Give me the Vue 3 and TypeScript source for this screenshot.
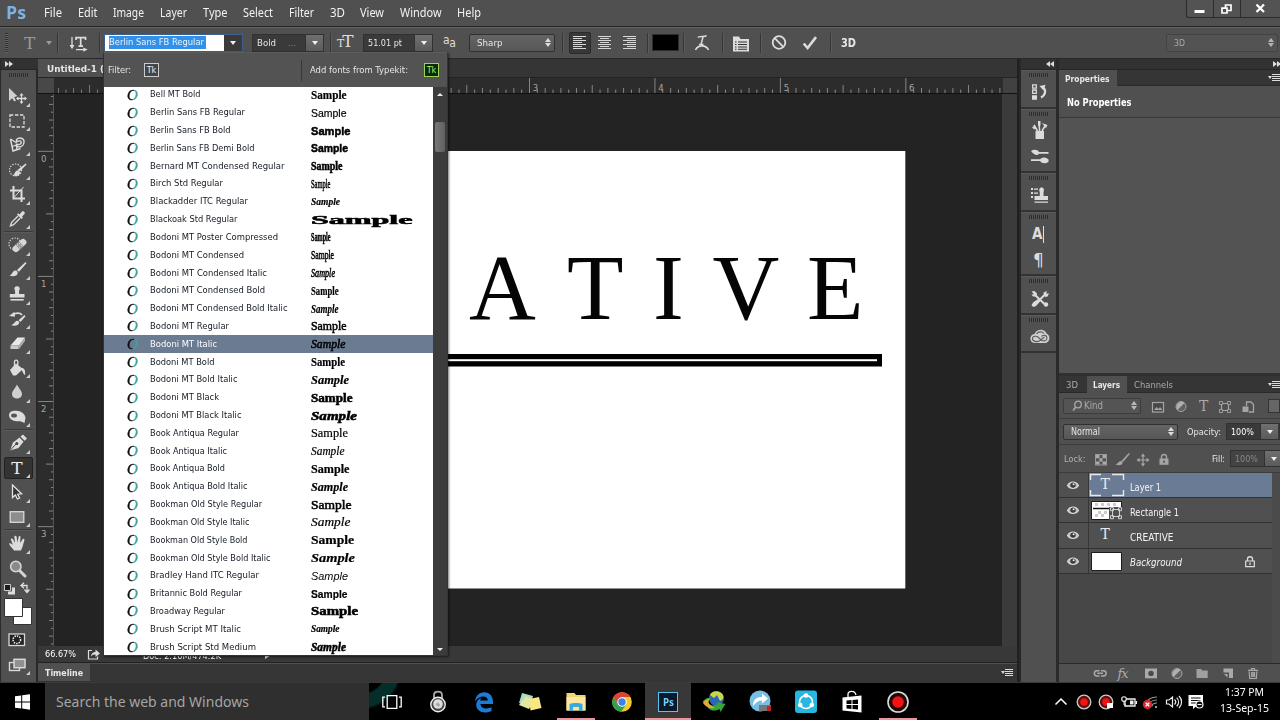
<script setup lang="ts">
import { h } from 'vue'

// Stretches a label horizontally to the given pixel width.
const vFit = {
  mounted(el: HTMLElement, b: { value: number }) {
    const natural = el.getBoundingClientRect().width
    el.style.transform = `scaleX(${b.value / natural})`
    el.style.marginRight = `${b.value - natural}px`
  },
}

const L = '#dcdcdc'
const S = (d: string, w = 1.4, c = L) => `<path d="${d}" fill="none" stroke="${c}" stroke-width="${w}"/>`
const F = (d: string, c = L) => `<path d="${d}" fill="${c}"/>`

const icons: Record<string, string> = {
  // toolbox, 24 x 24
  move: F('M4 4L4 17L7.2 14.2L9.2 17.5L11 16.4L9.2 13.2L12.3 12Z', '#d0d0d0') + S('M16.5 10V19M12 14.5H21', 1.3) + F('M16.5 9l2 2.4h-4zM16.5 20l2-2.4h-4zM11 14.5l2.4-2v4zM22 14.5l-2.4-2v4z'),
  marquee: `<rect x="5" y="6" width="14" height="12" fill="none" stroke="${L}" stroke-width="1.3" stroke-dasharray="3.4 1.6"/>`,
  lasso: S('M5.5 6L8 18L15.5 15.5', 1.5) + S('M5.5 6L11 9.5M7 13.5L12 12L11.5 17', 1.3) + S('M11.5 9V6.5C14 4.2 19.5 4.5 19 9.5C18.7 13.5 15 14.5 11.5 13.5V11.2C15 12 16.3 11 16.3 9.3C16.3 7.3 13.5 7.5 11.5 9Z', 1.4),
  quick: `<circle cx="10.5" cy="12" r="6" fill="none" stroke="${L}" stroke-width="1.2" stroke-dasharray="1.3 1.4"/>` + F('M20.6 5.4L21.6 6.6L14.6 13.6L12.5 12Z') + F('M8 17C10 16.5 9.5 13.5 12 12.5C15 12.5 16 15 14 17C12 18.5 10 18.5 8 17Z'),
  crop: S('M8.5 4V16.5H20M5 8.5H16.5V20', 2) + S('M18.5 5L9 15.5', 1),
  eyedrop: F('M14.5 7.5L17 4.5C19 3.5 20.5 5.5 19.5 7L17 9.5L18 10.8L16.5 12L12 7.5L13.3 6.3Z') + S('M13 9L6.5 15.5L5.5 18.8L8.6 17.7L15 11.2', 1.4),
  heal: `<circle cx="10" cy="11" r="6" fill="none" stroke="${L}" stroke-width="1.2" stroke-dasharray="1.3 1.4"/><g transform="rotate(-42 14.5 12.5)"><rect x="6.5" y="9.2" width="16" height="6.6" rx="3" fill="#d6d6d6"/><rect x="12" y="9.2" width="5" height="6.6" fill="#969696"/><path d="M13 11h1m1.5 0h1M13 13.8h1m1.5 0h1" stroke="#eee"/></g>`,
  brush: F('M20.5 4L21.5 5.2L14 13.8L12 12Z') + F('M4.5 17.5C7.5 17 7 13.5 10 12.6C13 12.6 13.6 15.4 11.5 17.2C9.5 18.7 6.5 18.5 4.5 17.5Z'),
  stamp: F('M12 4.2C14.2 4.2 15.2 6 14.6 7.6C14 9 13.8 10 14.2 12H19.5V15.6H4.8V12H10C10.4 10 10 9 9.6 7.6C9 6 9.8 4.2 12 4.2Z') + F('M5.5 17h13.2v1.6H5.5z'),
  history: F('M19.5 8L20.5 9.2L15.5 15L13.5 13.3Z') + F('M6 18C9 17.6 9.5 14.5 12 13.8C14.6 14 15 16.3 13 17.7C11 19 8 19 6 18Z') + S('M7.5 8.5C10 5.5 15 5.5 17 8', 1.8) + F('M4 9L9.5 4.7L10 9.8Z'),
  eraser: F('M5.5 14.5L12.5 6.5H20L14 14.5Z', '#e8e8e8') + F('M5.5 14.5H13.7V18H5.5Z', '#c9c9c9') + F('M14 14.5L20 6.5V10L14 18Z', '#adadad'),
  bucket: F('M5 14L11 7.5L18 13L11 19.5H8Z') + S('M9.5 12V5.5C9.5 3.6 12.8 3.6 12.8 5.5V9', 1.3) + F('M17 12C20 12.5 20.5 15 20 19C18.6 19 18.3 16 16.5 14Z'),
  blur: F('M12 4.5C13.5 8 17 11 17 14C17 20 7 20 7 14C7 11 10.5 8 12 4.5Z', '#cfcfcf'),
  dodge: F('M4 10C4 6 9 5 13 6C17 6.5 20 9 20.5 13L19.5 18L15.5 16.2C12 16.8 4 16 4 10Z') + '<ellipse cx="9" cy="10.6" rx="3" ry="2" fill="#555"/>',
  pen: F('M5 19.5L8 11.5L14.5 6.5L18.5 10.8L13.5 17L5 19.5Z') + S('M5.5 19L11 13', 1, '#444') + '<circle cx="11.8" cy="12.4" r="1.5" fill="#444"/>' + F('M15.5 5.5L18 3.4L22 7.6L19.6 9.7Z'),
  path: '<path d="M7.5 5V17.5L10.4 15L12.4 19L14.6 18L12.7 14.2L16.6 13.8Z" fill="#353535" stroke="#e4e4e4" stroke-width="1.3"/>',
  rect: '<rect x="5.2" y="6.7" width="13.6" height="10.6" fill="#8d8d8d" stroke="#d9d9d9" stroke-width="1.3"/>',
  hand: F('M9 19.5C7.5 17 4.5 15 4 12.5C5 11.5 7 12.8 8 14L5.8 8.6C6 7.2 7.5 7.2 8 8.3L10 12L9.3 5.6C9.7 4.3 11.2 4.4 11.5 5.6L12.5 11.5L13.7 5.5C14.4 4.5 15.6 5 15.5 6.2L15 12L17.8 8C18.8 7.4 19.8 8.2 19.3 9.4C18 13.5 17.5 17 15.8 19.5Z'),
  zoom: '<path d="M14.2 14.2L20 20" stroke="#d4d4d4" stroke-width="3" stroke-linecap="round"/><circle cx="10.8" cy="10.5" r="5.2" fill="#8a8a8a" stroke="#d4d4d4" stroke-width="1.6"/>',
  qmask: '<rect x="4" y="6" width="15.5" height="11.5" fill="#222" stroke="#d8d8d8" stroke-width="1.3"/><circle cx="11.8" cy="11.7" r="3.8" fill="none" stroke="#eee" stroke-width="1.5" stroke-dasharray="1.5 1"/>',
  screen: '<rect x="4.5" y="9.5" width="10" height="8" fill="#555" stroke="#d8d8d8" stroke-width="1.4"/><rect x="9" y="6.3" width="11" height="8.4" fill="#909090" stroke="#d8d8d8" stroke-width="1.5"/>',
  // options bar
  warp: S('M7 5.5C8 3.3 14 5.5 15.5 3.5M12 5L10 12.5M8 12.6H12.5', 1.5) + S('M4.5 18C7 12.5 15 12.5 17.5 18', 1.6),
  orient: S('M5 5V16', 1.3) + F('M2.6 13L5 17.2L7.4 13Z') + S('M9 8V5.6H18.5V8M13.7 5.6V14M11.5 14.2H16', 1.7) + S('M9 17.6H18', 1.3) + F('M16.3 15.4L20.6 17.6L16.3 19.8Z'),
  panel: F('M3 4.5H9L10.5 7H19V19.5H3Z') + S('M5 10H6.5M8 10H17M5 12.5H6.5M8 12.5H17M5 15H6.5M8 15H17M5 17.3H6.5M8 17.3H17', 1.1, '#333'),
  cancel: `<circle cx="11" cy="10.5" r="6.3" fill="none" stroke="${L}" stroke-width="1.8"/>` + S('M6.7 6.2L15.3 14.8', 1.8),
  check: S('M4.7 11.5L8.6 16L17 5.1', 2.6),
  // dock
  dHistory: S('M4.7 3.8h3.6v3.4H4.7zM4.7 9h3.6v3.4H4.7z', 1.3) + F('M4 14.2h5v4.5H4zM11.5 5L17.5 3.8L15.5 9.5Z') + S('M15 6.5C18.5 9 17.5 14 13 16.5', 2.2),
  dBrushes: F('M7.5 12H16V20H7.5Z') + S('M9.5 12L6 6M11.6 12L11 3M14 12L17 6.8', 1.6) + F('M4 8L7 7L8 9L6 10.5ZM10 2H12.5V6.5H10ZM14 4L19.5 6L18 9.3Z'),
  dPresets: F('M3 6C6 4 9.5 4.5 11 7H20.5V8.8H11C9 11.4 6 9.5 3 6ZM3 14.2H12C15 11.6 18.5 12.5 20.5 14.5V17C17 19 14 18.6 12 16H3Z'),
  dClone: F('M3 4h2v2H3zM3 8h2v2H3zM3 12h2v2H3zM6 4.5h4v1.3H6zM6 8.5h4v1.3H6z') + F('M13.6 3.5C16 3.5 16.4 6 15.5 8V12H20V16H6.5V12H11.8V8C10.8 6 11.2 3.5 13.6 3.5ZM6.5 17.4H20V18.8H6.5Z'),
  dTools: S('M6 18.5L17.5 7', 2) + S('M6.5 7.5L17 17.5', 2) + F('M3.5 18.5L5 15.5L10 12L12.5 14L8 19L5.5 20ZM16 8.5L15.5 5.5L19 4L18 6.5L21 6.5L19.5 9.5L17.5 10ZM3.5 4.5L6.5 4L9 6.5L8.5 9.5L5 9.5L3.5 7.5L6 7.3Z') + '<circle cx="18" cy="17.5" r="2.2" fill="#dcdcdc"/>',
  dCloud: '<path d="M7 18C1 18 1 9.5 6.5 9C9 3.5 16.5 3.5 18.5 8.5C23 10.5 22 17.5 17.5 18Z" fill="#cfcfcf"/><path d="M16.5 12L12 15.5C9 17.500 4.500 16.500 4.500 13.700C4.500 10.800 8.500 10.500 10.500 12.500L13.500 15.200C15.500 16.500 19 16 19 13C19 10 15.500 9.500 13.500 11.500M8.500 9C10.500 6 14.500 6.500 16 8.500" fill="none" stroke="#5c5c5c" stroke-width="1.1"/>',
  // layers panel
  img: '<rect x="2.5" y="4.5" width="11" height="9.5" fill="#484848" stroke="#a5a5a5" stroke-width="1.2"/><path d="M4 12l2.5-3 2 2 1.5-2 2.5 3z" fill="#a5a5a5"/>',
  adj: '<circle cx="8" cy="8.500" r="5" fill="#606060" stroke="#a5a5a5"/><path d="M4.5 12A5 5 0 0 1 11.5 5Z" fill="#b0b0b0"/>',
  shape: '<path d="M4.5 5.5h7v7h-7z" fill="none" stroke="#a5a5a5" stroke-width="1.2"/><path d="M2.5 3.5h3v3h-3zM10.5 3.5h3v3h-3zM2.5 11.5h3v3h-3zM10.5 11.5h3v3h-3z" fill="#4f4f4f" stroke="#a5a5a5" stroke-width=".9"/>',
  smart: '<path d="M6.5 8V4h4.5l2.5 2.5V14H9" fill="none" stroke="#a5a5a5" stroke-width="1.3"/><path d="M2.5 8.5h6V14h-6z" fill="#a5a5a5"/>',
  checker: '<rect x="2.5" y="3.5" width="11" height="10.5" fill="#555" stroke="#999"/><path d="M3 4h3.5v3.3H3zM9.5 4H13v3.3H9.5zM6.5 7.3h3v3.2h-3zM3 10.5h3.5v3H3zM9.5 10.5H13v3H9.5z" fill="#aaa"/>',
  lbrush: F('M14.8 2L15.8 3L9 11L7.6 9.8Z', '#a5a5a5') + F('M1.5 13.5C4 13 4 10.5 6.5 10C9 10 9 12.5 7.5 13.6C6 14.6 3.5 14.4 1.5 13.5Z', '#a5a5a5'),
  lmove: S('M8 4V14M3 9H13', 1.2, '#a5a5a5') + F('M8 2.5l2.3 3H5.7zM8 15.5l2.3-3H5.7zM1.5 9l3-2.3v4.6zM14.5 9l-3-2.3v4.6z', '#a5a5a5'),
  lock: '<path d="M5.5 8V5.8C5.5 2.7 10.5 2.7 10.5 5.8V8" fill="none" stroke="#a5a5a5" stroke-width="1.4"/><path d="M3.5 7.5h9v6.3h-9z" fill="#a5a5a5"/><path d="M8 9.500v2.5" stroke="#444" stroke-width="1.3"/>',
  lock2: '<path d="M5.5 8V6C5.5 3 10.5 3 10.5 6V8" fill="none" stroke="#ddd" stroke-width="1.3"/><path d="M3.7 8h8.6v5.6H3.7z" fill="none" stroke="#ddd" stroke-width="1.2"/><path d="M8 9.6v2.4" stroke="#ddd" stroke-width="1.3"/>',
  eye: '<path d="M2.5 8.500C5 4 11 4 13.5 8.500C11 12.500 5 12.500 2.5 8.500Z" fill="#b8b8b8" stroke="#dcdcdc" stroke-width="1.1"/><circle cx="8" cy="8.1" r="2.7" fill="#3b3b3b"/><circle cx="8.6" cy="7.3" r="1" fill="#eee"/>',
  link: '<path d="M7.5 5.7H5C1.5 5.7 1.5 11 5 11H7.5M9 5.7h2.5C15 5.7 15 11 11.5 11H9M5.3 8.3H11" fill="none" stroke="#a9a9a9" stroke-width="1.5"/>',
  mask: '<path d="M2 3.5h12v9.8H2z" fill="#a9a9a9"/><circle cx="8" cy="8.4" r="2.7" fill="#494949"/>',
  folder: '<path d="M2.5 4h4.5l1.2 1.5h5.5V13H2.5z" fill="#a0a0a0"/>',
  newl: '<path d="M3.5 3.5h9.5V13H9V7.5H3.5z" fill="#a9a9a9"/><path d="M4 9l3.5 0v3.5z" fill="#a9a9a9"/>',
  trash: '<path d="M3 5.3h10M6.5 5V3.5h3V5M4.2 6.5l.5 7h6.6l.5-7M6.7 7v5M8.1 7v5M9.5 7v5" fill="none" stroke="#a9a9a9" stroke-width="1.2"/>',
  // taskbar, 28 x 28
  win: F('M6 8.3L12.2 7.5V13.5H6ZM13.2 7.3L21 6.3V13.5H13.2ZM6 14.5H12.2V20.5L6 19.7ZM13.2 14.5H21V21.7L13.2 20.6Z', '#fff'),
  taskview: S('M9.2 7.7H18.8V20.3H9.2ZM7 9.2H4.8V18.8H7M21 9.2H23.2V18.8H21', 1.3, '#fff'),
  padlock: '<path d="M10 10.500V7C10 2.5 18 2.5 18 7V10.500" fill="none" stroke="#aaa" stroke-width="1.8"/><circle cx="14" cy="16.500" r="7.2" fill="#444" stroke="#eee" stroke-width="1.4"/><circle cx="14" cy="16" r="4.8" fill="#dedede"/><path d="M11.500 16.500l2-2 1.5 1 1.500 2-2.500 1z" fill="#a5a5a5"/>',
  edge: '<path d="M5 13.5C6 1.5 22.5 1 23 13.5V16H10.5C10.8 21 17.5 21.5 21.5 19V23C14 26.5 6 23.5 6.2 16.5C6.5 13 8.5 11 11 10C10.5 11 10.3 12 10.3 12.6H17.8C18 7.5 9.5 6.5 5 13.5Z" fill="#1b7bd6"/>',
  notes: '<path d="M6 5l11 3-3 11-11-4z" fill="#a9dcc8"/><path d="M3 17l7-9 8 4-5 9z" fill="#e4e6a0"/><path d="M13 11l10-2 2.5 11-11 2.5z" fill="#f8e782"/>',
  explorer: '<path d="M4.5 5h8l1.5 2H23.5V22.5H4.5z" fill="#f2d478"/><path d="M4.5 9H23.5V22.5H4.5z" fill="#fbe6a0"/><path d="M7.5 23V16.5C7.5 14.5 20.5 14.5 20.5 16.5V23H17V19H11V23Z" fill="#3aa9dd"/>',
  chrome: '<circle cx="14" cy="14" r="9.8" fill="#f5c931"/><path d="M5.5 9.1A9.8 9.8 0 0 1 22.5 9.1H14L9.8 16.4Z" fill="#dc4437"/><path d="M5.5 9.1A9.8 9.8 0 0 0 13.2 23.8L18.2 16.4L9.8 16.4Z" fill="#31a053"/><circle cx="14" cy="14" r="4.7" fill="#fff"/><circle cx="14" cy="14" r="3.7" fill="#3f7fe8"/>',
  idm: '<circle cx="16.5" cy="10.5" r="7.5" fill="#2d66b8"/><path d="M10 7c2-5 10-5 13 0 1 3 0 5-3 6l-3-6-3 3z" fill="#c9d84a"/><path d="M2.5 14c2-3 5-5 9-4-3 1-4 3-3 5 2 3 6 3 9 1l-1-2 9 2-5 8-1-3c-7 4-13 0-13-6z" fill="#37a638"/><path d="M3 15c2-3 4-4 7-4-2 2-2 4 0 6l5 3c-6 1-9-1-12-5z" fill="#e5a93a"/>',
  blue: '<circle cx="14" cy="13" r="10.5" fill="#79bfe4"/><path d="M7 18c0-7 4-9 9-9V5.5l6 5-6 5v-3c-4 0-6 2-9 5.5z" fill="#fff"/><path d="M13 17h12v6H13z" fill="#777"/><path d="M21 18h4v5h-4z" fill="#b22"/>',
  share: '<rect x="3" y="2.5" width="22" height="22.5" rx="3" fill="#27b6dd"/><circle cx="14" cy="14" r="6.5" fill="none" stroke="#fff" stroke-width="1.6"/><circle cx="14" cy="7.5" r="2.3" fill="#fff"/><circle cx="8.2" cy="17" r="2.3" fill="#fff"/><circle cx="19.8" cy="17" r="2.3" fill="#fff"/>',
  store: '<path d="M4.5 9.5L23.5 7.5V24.5L4.5 22.5Z" fill="#fff"/><path d="M10 9V6C10 2.5 17 2 18 7" fill="none" stroke="#fff" stroke-width="1.3"/><path d="M8.5 12.5l5-.5v4h-5zM14.5 11.9l5.5-.5V16h-5.5zM8.5 17h5v4l-5-.5zM14.5 17H20v4.6l-5.5-.5z" fill="#000"/>',
  rec: '<circle cx="14" cy="14" r="10" fill="#210909" stroke="#ddd" stroke-width="1.6"/><circle cx="14" cy="14" r="5.8" fill="#f21313"/>',
  // tray, 22 x 22
  up: S('M5.5 13.5L11 8L16.5 13.5', 1.5, '#fff'),
  trec: '<circle cx="11" cy="11" r="6.8" fill="#5d1010" stroke="#ccc" stroke-width="1.3"/><circle cx="11" cy="11" r="3.8" fill="#f21313"/>',
  trec2: '<circle cx="11" cy="11" r="6.8" fill="#5d1010" stroke="#ccc" stroke-width="1.3"/><circle cx="11" cy="11" r="3.8" fill="#f21313"/><path d="M12 12h6v5h-6z" fill="#fff"/>',
  batt: '<path d="M7 8h10v7H7z" fill="none" stroke="#eee" stroke-width="1.3"/><path d="M12 9.5h3.5v4H12zM17.5 10h1.5v3h-1.5z" fill="#eee"/><circle cx="6" cy="8" r="2.3" fill="#000" stroke="#eee" stroke-width="1.1"/><path d="M6 10v4h2" fill="none" stroke="#eee"/>',
  wifi: '<path d="M6 14C6 9 11 6 17 6M9 15C9 11.5 12 9 17 9M12 15.5C12 13.5 14 12 17 12" fill="none" stroke="#999" stroke-width="1.2"/><path d="M15 15h2v2h-2z" fill="#999"/><circle cx="7.5" cy="13.5" r="4.7" fill="#d8272d"/><path d="M5.7 11.7l3.6 3.6m0-3.6l-3.6 3.6" stroke="#fff" stroke-width="1.3"/>',
  vol: '<path d="M3.5 9h2.5l3.5-3v10L6 13H3.5zM11.5 8.5c1.5 1.5 1.5 3.5 0 5M13.7 6.7c2.5 2.5 2.5 6 0 8.6M16 5c3.4 3.5 3.4 8.5 0 12" fill="none" stroke="#eee" stroke-width="1.2"/>',
  notif: '<path d="M3.5 4H18V15H11.5L8 18V15H3.5Z" fill="#fff"/><path d="M6 7h9.5M6 9.5h9.5M6 12h5" stroke="#111" stroke-width="1.2"/><circle cx="14.5" cy="13.5" r="3.5" fill="#000" stroke="#fff" stroke-width="1.2"/><path d="M12.5 13.5h4" stroke="#fff" stroke-width="1.2"/>',
}

const Icon = (p: { name: string; s: number }) =>
  h('svg', { viewBox: `0 0 ${p.s} ${p.s}`, width: p.s, height: p.s, innerHTML: icons[p.name] })
Icon.props = ['name', 's']

const menus: [string, number][] = [
  ['File', 18], ['Edit', 19.5], ['Image', 31], ['Layer', 27], ['Type', 24.5], ['Select', 30],
  ['Filter', 25], ['3D', 15], ['View', 24], ['Window', 41.5], ['Help', 24],
]
const toolGroups = [
  ['move', 'marquee', 'lasso', 'quick', 'crop', 'eyedrop'],
  ['heal', 'brush', 'stamp', 'history', 'eraser', 'bucket', 'blur', 'dodge'],
  ['pen', 'type', 'path', 'rect'],
  ['hand', 'zoom'],
]

// name, name width, sample width, sample style
const fonts: [string, number, number, string][] = [
  ['Bell MT Bold', 50.5, 35.5, 'b'],
  ['Berlin Sans FB Regular', 95, 35.5, 'sans'],
  ['Berlin Sans FB Bold', 80.5, 39.5, 'sans heavy'],
  ['Berlin Sans FB Demi Bold', 104.5, 37, 'sans heavy'],
  ['Bernard MT Condensed Regular', 134.5, 31.5, 'b heavy'],
  ['Birch Std Regular', 73, 19.5, 'tall'],
  ['Blackadder ITC Regular', 98, 29, 'i b small'],
  ['Blackoak Std Regular', 87.5, 101.5, 'b oak'],
  ['Bodoni MT Poster Compressed', 128, 19.5, 'b tall'],
  ['Bodoni MT Condensed', 94, 23, 'm'],
  ['Bodoni MT Condensed Italic', 117, 24, 'i m'],
  ['Bodoni MT Condensed Bold', 115, 27.5, 'b'],
  ['Bodoni MT Condensed Bold Italic', 137.5, 27.5, 'i b'],
  ['Bodoni MT Regular', 79, 35.5, 'm'],
  ['Bodoni MT Italic', 67, 34.5, 'i m'],
  ['Bodoni MT Bold', 64.5, 34, 'b'],
  ['Bodoni MT Bold Italic', 87.5, 38, 'i b'],
  ['Bodoni MT Black', 69, 41.5, 'b heavy'],
  ['Bodoni MT Black Italic', 91.5, 46, 'i b heavy'],
  ['Book Antiqua Regular', 89, 37, ''],
  ['Book Antiqua Italic', 77, 33.5, 'i'],
  ['Book Antiqua Bold', 75, 38.5, 'b'],
  ['Book Antiqua Bold Italic', 97.5, 37, 'i b'],
  ['Bookman Old Style Regular', 112, 40.5, 'm'],
  ['Bookman Old Style Italic', 99.5, 39.5, 'i'],
  ['Bookman Old Style Bold', 97.5, 43, 'b'],
  ['Bookman Old Style Bold Italic', 120.5, 44, 'i b'],
  ['Bradley Hand ITC Regular', 109, 37, 'sans i thin'],
  ['Britannic Bold Regular', 92, 36.5, 'sans b'],
  ['Broadway Regular', 75, 47, 'b heavy'],
  ['Brush Script MT Italic', 91, 28.5, 'i b small'],
  ['Brush Script Std Medium', 106, 35, 'i b heavy'],
]

const hTicks = Array.from({ length: 72 }, (_, i) => {
  const k = i + 37
  const x = 529.5 - 54 + (k - 48) * 7.84
  const len = k % 16 === 0 ? 15 : k % 8 === 0 ? 8 : k % 2 === 0 ? 5 : 3.5
  return { x, len, label: k % 16 === 0 ? String(k / 16) : '' }
}).filter(t => t.x < 949)
const hLeft = [4.5, 12, 19.5, 27.5, 35.5, 43.5].map((x, i) => ({ x, len: i === 4 ? 8 : i % 2 ? 3.5 : 5 }))
const vTicks = Array.from({ length: 72 }, (_, k) => {
  const n = k - 7
  return { y: 151.3 - 94 + n * 7.82, len: n % 16 === 0 ? 16 : n % 8 === 0 ? 8 : n % 2 === 0 ? 5 : 3, label: n % 16 === 0 ? String(n / 16) : '' }
}).filter(t => t.y < 553)

const dock = [['dHistory'], ['dBrushes', 'dPresets'], ['dClone'], ['A', 'P'], ['dTools'], ['dCloud']]
const layers = [
  { name: 'Layer 1', w: 31, kind: 'text', on: true },
  { name: 'Rectangle 1', w: 49, kind: 'rect', on: false },
  { name: 'CREATIVE', w: 43.5, kind: 'text', on: false },
  { name: 'Background', w: 52, kind: 'bg', on: false },
]
const apps = ['taskview', 'padlock', 'edge', 'notes', 'explorer', 'chrome', 'ps', 'idm', 'blue', 'share', 'store', 'rec']
const running = ['explorer', 'ps', 'rec']
const tray = ['up', 'trec', 'trec2', 'batt', 'wifi', 'vol', 'notif']
</script>

<template>
  <div class="screen">
    <header class="menubar">
      <span class="logo"><b v-fit="20">Ps</b></span>
      <nav><span v-for="m in menus" :key="m[0]" v-fit="m[1]">{{ m[0] }}</span></nav>
      <div class="winbtns">
        <span><svg width="26" height="18"><path d="M7.500 10h10v3h-10z" fill="#fff" /></svg></span>
        <span><svg width="26" height="18"><path d="M11.500 5h5.500v5.500h-5.500z" fill="#505050" stroke="#fff" stroke-width="1.7" /><path d="M8 8.200h5v4.800H8z" fill="#505050" stroke="#fff" stroke-width="1.7" /></svg></span>
        <span class="x"><svg width="40" height="18"><path d="M15.5 4.5l7.500 7.500m0-7.500l-7.500 7.500" stroke="#fff" stroke-width="2.3" /></svg></span>
      </div>
    </header>

    <div class="options">
      <i class="grip"></i>
      <span class="bigT">T</span><i class="caret dim"></i><i class="sep s1"></i>
      <Icon name="orient" :s="22" class="orient" /><i class="sep s2"></i>
      <div class="combo c-font"><div class="in"><span class="selected"><span v-fit="95">Berlin Sans FB Regular</span></span></div><div class="btn"><i class="caret"></i></div></div>
      <div class="combo c-style"><div class="in"><span v-fit="19">Bold</span><em>...</em></div><div class="btn"><i class="caret"></i></div></div>
      <i class="sep s3"></i>
      <span class="tt"><small>T</small>T</span>
      <div class="combo c-size"><div class="in"><span v-fit="34">51.01 pt</span></div><div class="btn"><i class="caret"></i></div></div>
      <span class="aa">a<sub>a</sub></span>
      <div class="select sharp"><span v-fit="25.5">Sharp</span><i class="updown"></i></div>
      <i class="sep s4"></i>
      <div v-for="k in ['l', 'c', 'r']" :key="k" class="align" :class="k"><i v-for="n in 7" :key="n" :class="{ short: n % 2 === 0 }"></i></div>
      <i class="sep s5"></i><div class="swatch"></div><i class="sep s6"></i>
      <Icon name="warp" :s="22" class="o-warp" /><i class="sep s7"></i>
      <Icon name="panel" :s="22" class="o-panel" /><i class="sep s8"></i>
      <Icon name="cancel" :s="22" class="o-cancel" /><Icon name="check" :s="22" class="o-check" /><i class="sep s9"></i>
      <span class="three"><b v-fit="15">3D</b></span>
      <div class="select ws"><span v-fit="11">3D</span><i class="updown"></i></div>
    </div>

    <main class="work">
      <aside class="tools">
        <div class="head"><i class="chev r"></i></div>
        <div class="toolbody">
          <i class="hgrip"></i>
          <div v-for="(g, gi) in toolGroups" :key="gi" class="tgroup">
            <div v-for="t in g" :key="t" class="tool" :class="{ on: t === 'type' }">
              <span v-if="t === 'type'" class="tglyph">T</span>
              <Icon v-else :name="t" :s="24" />
              <i v-if="t !== 'zoom'" class="corner"></i>
            </div>
          </div>
          <svg class="colors" width="36" height="48">
            <path d="M8 12h5.5V6.5" fill="none" stroke="#ddd" stroke-width="3" /><path d="M4.5 3.5h6v6h-6z" fill="#1b1b1b" stroke="#ccc" />
            <path d="M21.5 4.5h5.5v6M24 1.8l-3 2.7 3 2.7M24.5 8.5l2.5 3 2.5-3" fill="none" stroke="#ddd" stroke-width="1.3" />
            <path d="M13.5 26.5h18v17h-18z" fill="#fff" stroke="#333" /><path d="M4.5 17.5h18v18h-18z" fill="#fff" stroke="#333" />
          </svg>
          <div class="tool"><Icon name="qmask" :s="24" /></div>
          <div class="tool"><Icon name="screen" :s="24" /><i class="corner"></i></div>
        </div>
      </aside>

      <section class="doc">
        <div class="tabs"><span class="tab"><b v-fit="57">Untitled-1 (</b></span></div>
        <div class="rulerH">
          <i class="origin"></i>
          <svg width="949" height="16">
            <line v-for="t in hLeft" :key="'l' + t.x" :x1="t.x" :x2="t.x" :y1="15 - t.len" y2="15" stroke="#777" />
            <g v-for="t in hTicks" :key="t.x">
              <line :x1="t.x" :x2="t.x" :y1="15 - t.len" y2="15" stroke="#858585" />
              <text v-if="t.label" :x="t.x + 3.3" y="12.5" class="rt">{{ t.label }}</text>
            </g>
          </svg>
          <i class="rend"></i>
        </div>
        <div class="stage">
          <svg class="rulerV" width="16" height="554">
            <g v-for="t in vTicks" :key="t.y">
              <line :x1="16 - t.len" x2="16" :y1="t.y" :y2="t.y" stroke="#858585" />
              <text v-if="t.label" x="3" :y="t.y + 10.5" class="rt">{{ t.label }}</text>
            </g>
          </svg>
          <div class="paste">
            <svg class="art" width="803" height="438">
              <rect width="802.3" height="437.5" fill="#fff" />
              <text class="word" y="167.5" x="366 464 550 609.5 704">ATIVE</text>
              <rect x="200" y="203" width="579" height="12.5" fill="#000" />
              <rect x="200" y="208.2" width="574" height="2" fill="#fff" />
            </svg>
          </div>
          <div class="vscroll"></div>
        </div>
        <div class="status">
          <span class="pct"><b v-fit="31">66.67%</b></span>
          <svg width="16" height="13"><path d="M6 2.5H2.5v8.5h9V8.5" fill="none" stroke="#ddd" stroke-width="1.2" /><path d="M5 8.5C5.5 5 7.5 4 9.5 4V1.5l4.5 4-4.5 3.5V6.5C7.5 6.3 6 7 5 8.5z" fill="#ddd" /></svg>
          <span class="docsize"><span v-fit="78">Doc: 2.16M/474.2K</span></span>
          <i class="play"></i>
        </div>
        <div class="timeline"><span class="tab"><b v-fit="38">Timeline</b></span><i class="pmenu"></i></div>
      </section>

      <aside class="dock">
        <div class="head"><i class="chev l"></i></div>
        <div v-for="(g, i) in dock" :key="i" class="dgroup">
          <i class="hgrip"></i>
          <div v-for="d in g" :key="d" class="ditem">
            <span v-if="d === 'A'" class="dA">A<i></i></span>
            <span v-else-if="d === 'P'" class="dP">¶</span>
            <Icon v-else :name="d" :s="24" />
          </div>
        </div>
      </aside>

      <aside class="panels">
        <div class="head"><i class="chev r"></i></div>
        <div class="ptabs"><span class="tab prop"><b v-fit="44.5">Properties</b></span><i class="pmenu"></i></div>
        <div class="noprop"><b v-fit="64.5">No Properties</b></div>
        <div class="propbody"></div>
        <div class="ptabs lt">
          <span class="itab t3d"><span v-fit="12">3D</span></span><span class="tab lay"><b v-fit="27">Layers</b></span><span class="itab ch"><span v-fit="39">Channels</span></span><i class="pmenu"></i>
        </div>
        <div class="prow filter">
          <div class="select kind"><svg width="12" height="12"><circle cx="7" cy="4.5" r="3.3" fill="none" stroke="#aaa" stroke-width="1.3" /><path d="M4.8 7L2 10.5" stroke="#aaa" stroke-width="1.5" /></svg><span v-fit="19">Kind</span><i class="updown"></i></div>
          <Icon name="img" :s="16" /><Icon name="adj" :s="16" /><span class="fT">T</span><Icon name="shape" :s="16" /><Icon name="smart" :s="16" /><i class="switch"></i>
        </div>
        <div class="prow blend">
          <div class="select normal"><span v-fit="29">Normal</span><i class="updown"></i></div>
          <span class="plabel op"><span v-fit="34">Opacity:</span></span>
          <div class="combo num"><div class="in"><span v-fit="23">100%</span></div><div class="btn"><i class="caret"></i></div></div>
        </div>
        <div class="prow locks">
          <span class="plabel lk"><span v-fit="21.5">Lock:</span></span>
          <Icon name="checker" :s="16" /><Icon name="lbrush" :s="16" /><Icon name="lmove" :s="16" /><Icon name="lock" :s="16" />
          <span class="plabel fl"><span v-fit="13">Fill:</span></span>
          <div class="combo num off"><div class="in"><span v-fit="23">100%</span></div><div class="btn"><i class="caret"></i></div></div>
        </div>
        <div class="layers">
          <div v-for="l in layers" :key="l.name" class="layer" :class="{ on: l.on, bg: l.kind === 'bg' }">
            <div class="eye"><Icon name="eye" :s="16" /></div>
            <div class="lbody">
              <svg class="thumb" width="36" height="24">
                <template v-if="l.kind === 'text'">
                  <path v-if="l.on" d="M1.5 7V1.5H12M23 1.5H34.5V7M1.5 17V22.5H12M23 22.5H34.5V17" fill="none" stroke="#e8e8e8" stroke-width="1.4" />
                  <text x="11.5" y="15.5" class="lt-t">T</text>
                </template>
                <template v-else>
                  <path d="M2.5 3.5h30v18h-30z" fill="#fff" stroke="#1c1c1c" />
                  <template v-if="l.kind === 'rect'">
                    <path d="M6 5h3v3H6zM12 5h3v3h-3zM18 5h3v3h-3zM24 5h3v3h-3zM9 13h3v3H9zM15 13h3v3h-3zM6 16h3v3H6zM12 16h3v3h-3z" fill="#ccc" />
                    <path d="M4 10.5h17" stroke="#111" stroke-width="1.5" /><path d="M20 9h13v13H20z" fill="#4f4f4f" />
                    <path d="M23.5 11.5h7v7h-7zM21.5 9.7h3v3h-3zM29.5 9.7h3v3h-3zM21.5 17.7h3v3h-3zM29.5 17.7h3v3h-3z" fill="#4f4f4f" stroke="#ddd" stroke-width=".9" />
                  </template>
                </template>
              </svg>
              <span class="lname"><span v-fit="l.w">{{ l.name }}</span></span>
              <Icon v-if="l.kind === 'bg'" name="lock2" :s="16" class="lk2" />
            </div>
          </div>
        </div>
        <div class="pfoot">
          <Icon name="link" :s="16" /><span class="fx">fx</span><Icon name="mask" :s="16" /><Icon name="adj" :s="16" /><Icon name="folder" :s="16" /><Icon name="newl" :s="16" /><Icon name="trash" :s="16" />
        </div>
      </aside>
    </main>

    <footer class="taskbar">
      <div class="start"><Icon name="win" :s="28" /></div>
      <div class="search"><span v-fit="184">Search the web and Windows</span></div>
      <div class="apps">
        <div v-for="a in apps" :key="a" class="app" :class="{ run: running.includes(a), act: a === 'ps' }">
          <span v-if="a === 'ps'" class="psic"><span v-fit="11">Ps</span></span>
          <Icon v-else :name="a" :s="28" />
        </div>
      </div>
      <div class="tray"><Icon v-for="t in tray" :key="t" :name="t" :s="22" /></div>
      <div class="clock"><div><span v-fit="39">1:37 PM</span></div><div><span v-fit="49">13-Sep-15</span></div></div>
    </footer>

    <div class="drop">
      <div class="dhead">
        <span class="fl1"><span v-fit="23">Filter:</span></span><span class="tk">Tk</span><i class="dsep"></i>
        <span class="fl2"><span v-fit="98">Add fonts from Typekit:</span></span><span class="tk green">Tk</span>
      </div>
      <div class="dlist">
        <div class="rows">
          <div v-for="(f, i) in fonts" :key="f[0]" class="frow" :class="{ on: i === 14 }">
            <span class="oicon">O</span>
            <span class="fname"><span v-fit="f[1]">{{ f[0] }}</span></span>
            <span class="fsample" :class="f[3]"><span v-fit="f[2]">Sample</span></span>
          </div>
        </div>
        <div class="sbar"><i class="su"></i><i class="thumbbar"></i><i class="sd"></i></div>
      </div>
    </div>
  </div>
</template>

<style>
body { margin: 0; background: #000; overflow: hidden; }
</style>

<style scoped>
.screen { position: relative; width: 1280px; height: 720px; overflow: hidden; display: flex; flex-direction: column; background: #000; color: #e6e6e6; font: 10px/12px "DejaVu Sans Condensed", "DejaVu Sans", sans-serif; white-space: nowrap; }
.screen * { box-sizing: border-box; }
svg { display: block; flex: none; }
i { display: block; flex: none; font-style: normal; }
nav span, .screen span > span, .screen b, .select > span, .in > span, .clock span { display: inline-block; transform-origin: 0 50%; }

.menubar { height: 26px; flex: none; display: flex; background: #505050; }
.logo { width: 44px; padding-left: 6px; color: #7fb2e2; font: 18px/24px "Open Sans", sans-serif; }
.logo b { font-weight: 700; }
.menubar nav { display: flex; gap: 15.8px; font: 12px/26px "Noto Sans", sans-serif; color: #f2f2f2; }
.winbtns { margin-left: auto; display: flex; height: 18px; border: 1px solid #2b2b2b; border-top: 0; border-right: 0; border-radius: 0 0 0 3px; background: #535353; width: 94px; }
.winbtns span + span { border-left: 1px solid #2d2d2d; }

.options { height: 33px; flex: none; display: flex; align-items: center; background: #505050; border-top: 1px solid #262626; border-bottom: 1px solid #282828; box-shadow: inset 0 1px #636363; font-size: 9px; }
.options > * { flex: none; }
.grip { width: 3px; height: 20px; margin-left: 5px; background: repeating-linear-gradient(#2d2d2d 0 1px, #666 1px 2px); }
.bigT { width: 14px; margin-left: 16px; font: 17px/20px "DejaVu Serif", serif; color: #9a9a9a; }
.caret { width: 0; height: 0; border: 3px solid transparent; border-top: 4px solid #f0f0f0; border-bottom: 0; }
.dim { border-top-color: #9a9a9a; margin-left: 8px; }
.sep { width: 2px; height: 20px; border-left: 1px solid #363636; border-right: 1px solid #5c5c5c; }
.s1 { margin-left: 5px; }
.orient { margin-left: 8px; }
.s2 { margin-left: 10px; }
.combo { display: flex; height: 18px; border: 1px solid #313131; background: #3a3a3a; }
.combo .in { flex: 1; display: flex; align-items: center; background: #3a3a3a; }
.combo .btn { width: 18px; display: flex; align-items: center; justify-content: center; background: linear-gradient(#6f6f6f, #5b5b5b); border-left: 1px solid #313131; }
.c-font { margin-left: 3px; width: 139px; border-color: #3c5f90; }
.c-font .in { background: #fff; padding-left: 4px; }
.c-font .btn { background: #3a3a3a; border: 0; width: 18px; }
.selected { background: #3390e8; color: #e6f4ff; padding-right: 1px; line-height: 13px; width: 97px; }
.c-style { margin-left: 9px; width: 72px; }
.c-style .in { padding-left: 4px; }
.c-style em { margin-left: 12px; font-style: normal; color: #888; }
.s3 { margin-left: 6px; }
.tt { margin-left: 5px; width: 19px; font: 17px/20px "DejaVu Serif", serif; color: #ddd; letter-spacing: -2px; }
.tt small { font-size: 11px; }
.c-size { margin-left: 7px; width: 70px; }
.c-size .in { padding-left: 4px; }
.aa { margin-left: 10px; width: 17px; font: 12px/14px "DejaVu Sans Condensed", sans-serif; color: #ddd; transform: translateY(-3px); letter-spacing: -.5px; }
.aa sub { font-size: 12px; line-height: 0; }
.select { display: flex; align-items: center; height: 18px; border: 1px solid #303030; border-radius: 2px; background: linear-gradient(#646464, #575757); padding: 0 3px 0 7px; }
.select .updown { margin-left: auto; }
.updown { width: 6px; height: 9px; display: flex; flex-direction: column; justify-content: space-between; }
.updown::before, .updown::after { content: ""; width: 0; height: 0; border: 3px solid transparent; }
.updown::before { border-bottom: 4px solid #ddd; border-top: 0; }
.updown::after { border-top: 4px solid #ddd; border-bottom: 0; }
.sharp { margin-left: 9px; width: 86px; }
.s4 { margin-left: 7px; }
.align { width: 22px; height: 22px; display: flex; flex-direction: column; gap: 1px; padding: 3px 4px 4px 3px; border: 1px solid transparent; border-radius: 2px; }
.align i { height: 1px; width: 13px; background: #d8d8d8; }
.align .short { width: 9px; }
.align.c { align-items: center; }
.align.r { align-items: flex-end; }
.align.l { margin-left: 5px; background: #383838; border-color: #2b2b2b; }
.align.c { margin-left: 3px; }
.align.r { margin-left: 3px; }
.s5 { margin-left: 6px; }
.swatch { margin-left: 3px; width: 27px; height: 17px; background: #000; border: 1px solid #2d2d2d; }
.s6 { margin-left: 4px; }
.o-warp { margin-left: 6px; } .s7 { margin-left: 9px; } .o-panel { margin-left: 6px; } .s8 { margin-left: 8px; }
.o-cancel { margin-left: 6px; } .o-check { margin-left: 9px; } .s9 { margin-left: 9px; }
.three { margin-left: 9px; width: 30px; font-size: 13px; line-height: 16px; }
.options .ws { margin-left: auto; margin-right: 2px; width: 112px; color: #aaa; border-color: #434343; background: #535353; }
.ws .updown { opacity: .7; }

.work { flex: 1; min-height: 0; display: flex; background: #282828; }
.head { height: 11px; flex: none; background: #323232; border-bottom: 1px solid #262626; display: flex; align-items: center; }
.chev { width: 8px; height: 6px; display: flex; }
.chev::before, .chev::after { content: ""; width: 0; height: 0; border: 3px solid transparent; }
.chev.r::before, .chev.r::after { border-left: 4px solid #ddd; border-right: 0; }
.chev.l::before, .chev.l::after { border-right: 4px solid #ddd; border-left: 0; }
.hgrip { width: 19px; height: 4px; background: repeating-linear-gradient(90deg, #2b2b2b 0 1px, #555 1px 2px); }

.tools { width: 38px; flex: none; display: flex; flex-direction: column; border-left: 1px solid #2b2b2b; }
.tools .head .chev { margin-left: 4px; }
.toolbody { width: 35px; flex: 1; background: #505050; }
.toolbody > .hgrip { margin: 3px 0 7px 8px; }
.tgroup + .tgroup::before { content: ""; display: block; height: 0; margin: 0 3px; border-top: 1px solid #3a3a3a; border-bottom: 1px solid #5a5a5a; }
.tool { position: relative; height: 24.5px; display: flex; align-items: center; padding-left: 4px; }
.tool.on::before { content: ""; position: absolute; left: 3px; top: 1px; width: 27px; height: 20px; background: #333; border: 1px solid #222; border-radius: 2px; }
.tglyph { position: relative; width: 24px; text-align: center; font: 17px/22px "DejaVu Serif", serif; color: #eee; }
.corner { position: absolute; left: 25px; bottom: 2px; width: 4px; height: 4px; border: 2px solid #ccc; border-left-color: transparent; border-top-color: transparent; }
.colors { margin: 1px 0 -1px -1px; }

.doc { width: 981px; flex: none; display: flex; flex-direction: column; background: #343434; border-right: 2px solid #202020; }
.tabs { height: 19px; flex: none; background: #353535; border-bottom: 1px solid #242424; }
.tab { display: block; background: #505050; color: #e8e8e8; }
.tabs .tab { height: 18px; width: 240px; padding-left: 9px; font-size: 9.5px; line-height: 19px; }
.rulerH { height: 16px; flex: none; display: flex; background: #2c2c2c; border-bottom: 1px solid #111; }
.origin { width: 16px; background: #484848; }
.rend { flex: 1; background: #414141; }
.rt { font: 9.5px "DejaVu Sans Condensed", sans-serif; fill: #a5a5a5; }
.stage { flex: 1; min-height: 0; display: flex; }
.rulerV { background: #2c2c2c; border-right: 1px solid #555; }
.paste { flex: 1; background: #232323; overflow: hidden; padding: 57px 0 0 49px; }
.word { font: 92.5px "Liberation Serif", serif; fill: #050505; }
.vscroll { width: 15px; background: #3b3b3b; }
.status { height: 17px; flex: none; display: flex; align-items: center; background: #383838; border-bottom: 1px solid #222; padding-left: 7px; }
.status .pct { width: 41px; font-size: 9px; }
.status b { font-weight: 500; color: #fff; }
.docsize { margin-left: 41px; width: 122px; font-size: 9.5px; padding-top: 3px; color: #fff; }
.play { border: 4px solid transparent; border-left: 6px solid #eee; margin-top: 1px; }
.timeline { height: 18px; flex: none; display: flex; justify-content: space-between; align-items: center; background: #363636; border-top: 1px solid #505050; margin-bottom: 1px; padding-right: 3px; }
.timeline .tab { height: 17px; width: 52px; padding-left: 7px; font-size: 9px; line-height: 19px; }
.pmenu { width: 13px; height: 8px; margin-left: auto; display: flex; align-items: flex-start; }
.pmenu::before { content: ""; flex: none; margin-top: 2px; border: 2.5px solid transparent; border-top: 3px solid #ddd; border-bottom: 0; }
.pmenu::after { content: ""; flex: none; width: 8px; height: 8px; background: repeating-linear-gradient(#ddd 0 1px, #333 1px 2px); }

.dock { width: 40px; flex: none; padding-left: 2px; background: #505050; background-clip: content-box; border-right: 3px solid #2a2a2a; display: flex; flex-direction: column; }
.dock .head .chev { margin-left: 25px; }
.dgroup { border-bottom: 2px solid #333; border-top: 1px solid #5b5b5b; height: 38.5px; display: flex; flex-direction: column; flex: none; }
.dgroup:nth-child(3), .dgroup:nth-child(5) { height: 64.5px; }
.dgroup > .hgrip { margin: 2px 0 3px 8px; }
.ditem { height: 25.5px; padding-left: 7px; display: flex; align-items: center; }
.dA { font: bold 15px/20px "DejaVu Sans Condensed", sans-serif; color: #ddd; display: flex; padding-left: 4px; }
.dA i { width: 1px; height: 17px; margin: 2px 0 0 1px; background: #ddd; }
.dP { font: 17px/20px "DejaVu Sans", sans-serif; color: #ddd; padding-left: 5px; }

.panels { width: 221px; flex: none; display: flex; flex-direction: column; background: #505050; }
.panels .head .chev { margin-left: 214px; }
.ptabs { height: 16px; flex: none; display: flex; background: #353535; box-shadow: inset 0 -1px #2a2a2a; align-items: center; font-size: 9px; line-height: 18px; }
.ptabs .tab { height: 16px; }
.prop { width: 58px; padding-left: 6px; }
.ptabs .pmenu { margin-right: -1px; }
.noprop { height: 32px; flex: none; border-bottom: 1px solid #3a3a3a; padding-left: 8px; font-size: 10px; line-height: 33px; color: #fff; }
.propbody { flex: 1; background: #535353; border-bottom: 3px solid #303030; }
.lt { font-size: 9.5px; height: 17px; }
.ptabs.lt .tab { height: 17px; }
.itab { color: #aaa; padding-left: 7px; }
.t3d { width: 28px; } .lay { width: 40px; padding-left: 6px; } .ch { width: 54px; }
.prow { height: 26px; flex: none; display: flex; align-items: center; border-bottom: 1px solid #3c3c3c; overflow: hidden; }
.filter .select { width: 83px; height: 16px; margin: 0 9px 0 4px; color: #aaa; border-color: #3c3c3c; background: #545454; }
.kind svg { margin-right: 1px; }
.kind .updown { opacity: .75; }
.filter > svg { margin-right: 7px; }
.fT { font: 14px/16px "DejaVu Serif", serif; color: #a8a8a8; width: 16px; margin-right: 6px; text-align: center; }
.switch { width: 12px; height: 14px; background: #666; border: 1px solid #333; margin-left: 5px; }
.blend .select { width: 120px; height: 16px; margin-left: 4px; }
.num { width: 54px; height: 17px; flex: none; font-size: 9px; }
.num .in { padding-left: 4px; color: #fff; width: 33px; flex: none; }
.num .btn { flex: none; }
.off .in { color: #888; background: #444; }
.plabel { font-size: 9.5px; flex: none; }
.op { margin-left: 9px; width: 39px; }
.lk { margin-left: 5px; width: 29px; color: #b0b0b0; }
.locks > svg { margin-right: 5px; }
.fl { margin-left: 35px; width: 18px; }
.locks { height: 28px; }
.layers { height: 190px; flex: none; background: #474747; border-right: 8px solid #4b4b4b; }
.layer { height: 25.2px; display: flex; border-bottom: 1px solid #323232; background: #505050; }
.eye { width: 30px; display: flex; align-items: center; padding-left: 6px; border-right: 1px solid #373737; }
.lbody { flex: 1; display: flex; align-items: center; }
.on .lbody { background: #6a7c95; }
.thumb { margin-right: 5px; }
.lt-t { font: 14px "DejaVu Serif", serif; fill: #eaeaea; }
.lname { font-size: 10px; padding-top: 5px; color: #f4f4f4; }
.bg .lname { font-style: italic; }
.lk2 { margin-left: auto; margin-right: 14px; }
.pfoot { height: 19px; flex: none; display: flex; align-items: center; gap: 9.5px; padding-left: 33px; border-top: 1px solid #2a2a2a; }
.fx { width: 16px; font: italic 13px/15px "DejaVu Serif", serif; color: #aaa; letter-spacing: -1px; }

.taskbar { height: 38px; flex: none; display: flex; background: #000; border-top: 1px solid #3a3a3a; font-family: "Noto Sans", sans-serif; }
.start { width: 45px; display: flex; align-items: center; padding-left: 9px; }
.search { width: 324px; background: #2f2f2f; color: #a5a5a5; font-size: 14px; line-height: 37px; padding-left: 11px; }
.apps { display: flex; width: 552px; background: radial-gradient(circle at -8px -14px, #000 24px, #052d2a 26px, #052d2a 38px, #000 41px); }
.app { width: 46px; height: 37px; display: flex; align-items: center; justify-content: center; position: relative; }
.run::after { content: ""; position: absolute; left: 4px; right: 4px; bottom: 0; height: 2px; background: #e9959b; }
.act { background: #383838; }
.act::after { left: 0; right: 0; }
.psic { width: 20px; height: 20px; border: 1.5px solid #55c5ef; background: #0a1a2c; color: #6fd2f6; font: bold 11px/17px "Noto Sans", sans-serif; padding-left: 4px; }
.tray { display: flex; align-items: center; gap: .5px; margin-left: 129px; }
.clock { margin-left: 7px; width: 60px; font-size: 11.5px; line-height: 16px; color: #fff; text-align: center; padding-top: 1px; }

.drop { position: absolute; left: 103px; top: 52px; width: 345px; height: 604px; background: #535353; border: 1px solid #333; border-top-color: #5c5c5c; display: flex; flex-direction: column; box-shadow: 1px 1px 2px #0008; }
.dhead { height: 34px; flex: none; display: flex; align-items: center; padding-left: 4px; font-size: 9.5px; }
.fl1 { width: 36px; } .fl2 { width: 114px; }
.tk { width: 15px; height: 14px; border: 1px solid #ccc; font: 9px/12px "DejaVu Sans Condensed", sans-serif; text-align: center; color: #eee; background: #444; }
.green { background: #0a2a08; border-color: #9bd45b; color: #b5ec6b; }
.dsep { width: 1px; height: 21px; background: #383838; margin: 0 8px 0 142px; }
.dlist { flex: 1; min-height: 0; display: flex; }
.rows { width: 329px; background: #fff; overflow: hidden; }
.rows .frow:first-child { margin-top: -1.5px; }
.frow { height: 17.82px; display: flex; align-items: center; color: #141a24; font-size: 9px; }
.frow.on { background: #6a7b92; }
.frow.on .fname { color: #fff; }
.oicon { width: 12px; margin: 0 5px 0 23px; font: italic 15px/15px "Liberation Serif", serif; color: transparent; background: linear-gradient(100deg, #0c0c0c 48%, #3fa39b 56%); -webkit-background-clip: text; background-clip: text; -webkit-text-stroke: .4px transparent; transform: translateY(1px); }
.fname { width: 161px; margin-left: 5.5px; }
.fsample { font: 11.5px/15px "Liberation Serif", serif; color: #000; -webkit-text-stroke: .2px #000; padding-top: 2px; margin-left: .5px; }
.i { font-style: italic; } .b { font-weight: 700; } .m { -webkit-text-stroke: .5px #000; }
.heavy { font-weight: 700; -webkit-text-stroke: .5px #000; }
.sans { font-family: "Liberation Sans", sans-serif; }
.thin { -webkit-text-stroke: 0; }
.small { font-size: 9.5px; } .tall { font-size: 12.5px; -webkit-text-stroke: .5px #000; }
.oak { -webkit-text-stroke: .5px #000; }
.sbar { flex: 1; background: #3c3c3c; display: flex; flex-direction: column; align-items: center; }
.su { border: 3px solid transparent; border-bottom: 3px solid #eee; border-top: 0; margin: 6px 0 26px; }
.thumbbar { width: 10px; height: 30px; background: linear-gradient(90deg, #777, #606060); border-radius: 2px; }
.sd { border: 3px solid transparent; border-top: 3px solid #eee; border-bottom: 0; margin: auto 0 4px; }
</style>
